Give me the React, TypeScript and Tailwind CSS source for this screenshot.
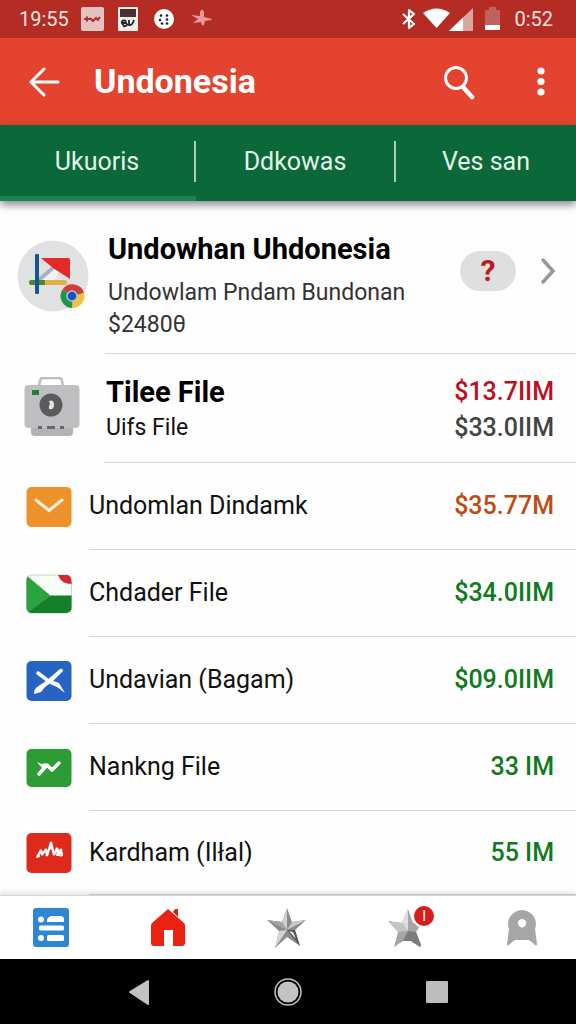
import React from 'react';

const tabs = ['Ukuoris', 'Ddkowas', 'Ves san'];

const rows = [
  { label: 'Undomlan Dindamk', amount: '$35.77M', color: 'text-[#c04a16]', icon: <MailIcon /> },
  { label: 'Chdader File', amount: '$34.0IIM', color: 'text-[#0f7a1c]', icon: <FlagIcon /> },
  { label: 'Undavian (Bagam)', amount: '$09.0IIM', color: 'text-[#0f7a1c]', icon: <CrossIcon /> },
  { label: 'Nankng File', amount: '33 IM', color: 'text-[#0f7a1c]', icon: <TrendIcon /> },
  { label: 'Kardham (Ilłal)', amount: '55 IM', color: 'text-[#0f7a1c]', icon: <PulseIcon /> },
];

function MailIcon() {
  return (
    <svg width="46" height="42" viewBox="0 0 46 42">
      <rect x="0.5" y="1" width="45" height="40" rx="5" fill="#ed922b" />
      <path d="M10 14l13 10.5L36 14" fill="none" stroke="#fff3dc" strokeWidth="3" strokeLinecap="round" />
    </svg>
  );
}

function FlagIcon() {
  return (
    <svg width="46" height="42" viewBox="0 0 46 42">
      <clipPath id="flag"><rect x="0.5" y="2" width="45" height="38" rx="5" /></clipPath>
      <g clipPath="url(#flag)">
        <rect y="2" width="46" height="38" fill="#f8fbf8" />
        <path d="M0 2l25 21L0 40z" fill="#2ba340" />
        <path d="M25 22.5h21V40H0z" fill="#14802a" />
        <path d="M32 2h11q3 3 3 9-11 0-14-9z" fill="#d8262c" />
      </g>
      <rect x="0.5" y="2" width="45" height="38" rx="5" fill="none" stroke="#14802a" strokeOpacity="0.25" />
    </svg>
  );
}

function CrossIcon() {
  return (
    <svg width="46" height="42" viewBox="0 0 46 42">
      <rect x="0.5" y="1" width="45" height="40" rx="5" fill="#2764c2" />
      <path d="M12 13l9 7 6 3" fill="none" stroke="#fff" strokeWidth="3.5" strokeLinecap="round" />
      <path d="M34 9q3-1 3 2L26 22l-7 5-4 5-7 2q0-5 3-7l9-6z" fill="#fff" />
      <path d="M25 20l8 3 6 10-8-6-7-3z" fill="#fff" />
    </svg>
  );
}

function TrendIcon() {
  return (
    <svg width="46" height="42" viewBox="0 0 46 42">
      <rect x="0.5" y="2" width="45" height="38" rx="5" fill="#2d9c35" />
      <path d="M13 27l8-9 5 5 7-7" fill="none" stroke="#fff" strokeWidth="3.5" strokeLinecap="round" strokeLinejoin="round" />
      <path d="M11 15l5 2 4-1-3 6z" fill="#fff" />
    </svg>
  );
}

function PulseIcon() {
  return (
    <svg width="46" height="42" viewBox="0 0 46 42">
      <rect x="0.5" y="1" width="45" height="40" rx="5" fill="#de2a1c" />
      <path d="M11 25l4-7 1 5 4-6 1 7 4-14 3 13 3-7 2 6 2-5 1 7" fill="none" stroke="#fff" strokeWidth="2.2" strokeLinejoin="bevel" />
      <path d="M10 26l3-6 1 5zM22 20l3-9 2 8-2-2zM30 24l1-6 5 7-3-1z" fill="#fff" />
    </svg>
  );
}

function StatusBar() {
  return (
    <div className="flex min-h-[38px] items-center bg-[#b42c24] pl-[19px] pr-[23px] text-white">
      <span className="text-xl text-[#fbe6e2]">19:55</span>
      <div className="ml-3 flex items-center gap-3.5">
        <svg width="23" height="24" viewBox="0 0 23 24">
          <rect width="23" height="24" rx="2" fill="#e3c2c2" />
          <path d="M3 12h6M6 9.5v5M9 11l3 3 3-3 2 2 2-3" fill="none" stroke="#b42c2c" strokeWidth="2" />
        </svg>
        <svg width="20" height="24" viewBox="0 0 20 24">
          <rect width="20" height="24" rx="1" fill="#f7eeee" />
          <rect x="2" y="2" width="16" height="8" fill="#4a2f33" />
          <path d="M4 16h4q0-3-2.5-2.500T4 16t2 3 4-2M11 13v5q3 1 5-5" fill="none" stroke="#222" strokeWidth="1.8" />
        </svg>
        <svg width="24" height="24" viewBox="0 0 24 24">
          <circle cx="12" cy="12" r="10" fill="#fff" />
          <g fill="#222">
            <circle cx="9" cy="8.500" r="1.3" /><circle cx="15" cy="8.500" r="1.3" />
            <circle cx="8" cy="13" r="1.3" /><circle cx="15" cy="12.500" r="1.3" />
            <circle cx="10" cy="16.500" r="1.3" /><circle cx="15" cy="16.500" r="1.3" />
          </g>
        </svg>
        <svg width="23" height="20" viewBox="0 0 23 20">
          <path d="M10 3q2-5 4 0v5l8 2q1 1-7 2l-1 4q-2 2-3-3l-8 1 5-4-7-4 9 1z" fill="#e79a96" />
        </svg>
      </div>
      <div className="ml-auto flex items-center">
        <svg width="16" height="24" viewBox="0 0 16 24">
          <path d="M2 7l11 10-5 4V3l5 4L2 17" fill="none" stroke="#fff" strokeWidth="2.2" strokeLinejoin="round" />
        </svg>
        <svg className="ml-1.5" width="52" height="24" viewBox="0 0 52 24">
          <path d="M0 6q13.500-9 27 0L13.500 21z" fill="#fff" />
          <path d="M50 1v23H26z" fill="#dba5a3" />
          <path d="M40 10.500V24H26z" fill="#fff" />
        </svg>
        <svg className="ml-2.5" width="15" height="24" viewBox="0 0 15 24">
          <path d="M0 3h4V0h7v3h4v15H0z" fill="#bf625e" />
          <rect y="18" width="15" height="5" fill="#fff" />
        </svg>
        <span className="ml-3.5 text-xl text-[#fbe6e2]">0:52</span>
      </div>
    </div>
  );
}

function Header() {
  return (
    <header className="flex min-h-[87px] items-center bg-[#e4442f] pl-7 pr-5 text-white">
      <button aria-label="Back">
        <svg width="32" height="32" viewBox="0 0 32 32">
          <path d="M16 3L3 16l13 13M3 16h27" fill="none" stroke="#fff" strokeWidth="3" strokeLinecap="round" strokeLinejoin="round" />
        </svg>
      </button>
      <h1 className="ml-[34px] text-[34px] font-bold">Undonesia</h1>
      <button className="ml-auto" aria-label="Search">
        <svg width="34" height="36" viewBox="0 0 34 36">
          <circle cx="14" cy="14" r="10.5" fill="none" stroke="#fff" strokeWidth="3" />
          <path d="M21 23l9 10" stroke="#fff" strokeWidth="4.5" strokeLinecap="round" />
        </svg>
      </button>
      <button className="ml-[50px]" aria-label="More options">
        <svg width="30" height="30" viewBox="0 0 30 30" fill="#fff">
          <circle cx="15" cy="4" r="3.6" />
          <circle cx="15" cy="14.5" r="3.6" />
          <circle cx="15" cy="25" r="3.6" />
        </svg>
      </button>
    </header>
  );
}

function AppsIcon() {
  return (
    <svg width="72" height="72" viewBox="0 0 72 72">
      <circle cx="36" cy="36" r="35.5" fill="#e1e1e3" />
      <path d="M22 40l12-15 10 2-6 13z" fill="#f2f3f6" />
      <path d="M22 40l16-14" stroke="#a9b0bb" strokeWidth="4" />
      <path d="M24 18h27q2 0 2 2v19L36 28z" fill="#e22a26" />
      <rect x="12" y="40" width="38" height="5" rx="2" fill="#e4b044" />
      <path d="M14 40h14v5H14q-2 0-2-2.500t2-2.500z" fill="#4b8a35" />
      <rect x="18" y="14" width="4" height="40" rx="1" fill="#15568f" />
      <g>
        <path d="M55.500 56L45.500 49.500A12 12 0 0 1 67 53z" fill="#d33a3c" />
        <path d="M55.500 56V68A12 12 0 0 1 45.500 49.500z" fill="#24934c" />
        <path d="M55.500 56L67 53A12 12 0 0 1 55.500 68z" fill="#efc33b" />
        <circle cx="55" cy="56" r="5" fill="#1b51b8" stroke="#a8c3e8" strokeWidth="1.5" />
      </g>
    </svg>
  );
}

function CameraIcon() {
  return (
    <svg width="56" height="60" viewBox="0 0 56 60">
      <path d="M15 10l1-6q0-3 3-3h16q3 0 3 3l1 6" fill="none" stroke="#bdbdbf" strokeWidth="2.5" />
      <path d="M7 48h42v7q0 4-4 4H11q-4 0-4-4z" fill="#b3b3b5" />
      <rect x="0.5" y="8" width="55" height="43" rx="4" fill="#bfbfc1" />
      <rect x="8" y="13" width="7" height="5" fill="#23803a" />
      <circle cx="27" cy="28" r="11.5" fill="#5b5b5e" />
      <path d="M25 24q5-2 5 4 0 5-5 4v-3l1-2z" fill="#e3e3e3" />
      <path d="M14 50.500h4M23 50.500h8M36 50.500h4" stroke="#68686a" strokeWidth="3" />
    </svg>
  );
}

function BottomNav() {
  return (
    <nav className="relative flex min-h-[64px] items-center justify-between border-t border-gray-300 bg-white pl-[33px] pr-[38px] shadow-[0_-3px_5px_rgba(0,0,0,0.1)]">
      <button aria-label="List">
        <svg width="36" height="39" viewBox="0 0 36 39">
          <rect width="36" height="39" rx="3" fill="#2f86d2" />
          <g fill="#fff">
            <circle cx="8" cy="11.5" r="3" />
            <path d="M14 14v-2q1-4 5-4h8q4 0 4 3v3z" />
            <rect x="6" y="17.5" width="25" height="5" rx="1.5" />
            <circle cx="8" cy="30" r="3" />
            <rect x="14" y="27" width="17" height="6" rx="1.5" />
          </g>
        </svg>
      </button>
      <button aria-label="Home">
        <svg width="34" height="37" viewBox="0 0 34 37">
          <path d="M22 3q1-3 3-3h2v8z" fill="#d32618" />
          <path d="M17 0l16 14q1 1 1 3v17q0 3-3 3h-9V21h-9v16H3q-3 0-3-3V17q0-2 1-3z" fill="#ec2213" />
        </svg>
      </button>
      <button aria-label="Favorites">
        <svg width="40" height="40" viewBox="0 0 40 40">
          <path d="M20 0l5 14 14-2-11 10 5 16-13-9-12 11 4-17L0 12l15 2z" fill="#8b8b8d" />
          <path d="M20 0v22l-5-8z" fill="#d0d0d1" />
          <path d="M0 12l15 2 5 8z" fill="#a6a6a8" />
          <path d="M20 22h8l5 16z" fill="#57575a" />
          <path d="M20 22l19-10-14 2z" fill="#c8c8c9" />
          <path d="M20 22l-8 1-4 17z" fill="#d5d5d6" />
          <path d="M22 23l4 1 3 7z" fill="#f0f0f0" />
        </svg>
      </button>
      <button className="relative" aria-label="Starred">
        <svg width="36" height="40" viewBox="0 0 36 40">
          <path d="M20 1l5 14 9 0-6 9 5 13-1 2-9-6h-8L6 39l4-15L0 13l14 2z" fill="#a5a5a7" />
          <path d="M20 1v22l-6-8z" fill="#dcdcdd" />
          <path d="M0 13l14 2 6 8-10 1z" fill="#c4c4c6" />
          <path d="M20 23l8 1 5 13-1 2-9-6h-8z" fill="#7c7c7f" />
        </svg>
        <span className="absolute -right-3 -top-1 flex size-6 items-center justify-center rounded-full border-2 border-white bg-[#d91c1c] text-sm text-white">I</span>
      </button>
      <button aria-label="Profile">
        <svg width="32" height="38" viewBox="0 0 32 38">
          <path fillRule="evenodd" d="M16 1a14 14 0 0 1 13 19l2 15q0 2-2 1-6-6-9-5h-8q-3-1-9 5-2 1-2-1l2-15A14 14 0 0 1 16 1zm0 9a4.200 4.200 0 1 0 .1 0z" fill="#a6a6a8" />
        </svg>
      </button>
    </nav>
  );
}

function SystemBar() {
  return (
    <div className="flex min-h-[65px] items-center justify-center gap-[115px] bg-black">
      <button aria-label="System back">
        <svg width="40" height="28" viewBox="0 0 40 28"><path d="M11 14L29 3v23z" fill="#c3c1c2" stroke="#c3c1c2" strokeWidth="2" strokeLinejoin="round" /></svg>
      </button>
      <button aria-label="System home">
        <svg width="28" height="28" viewBox="0 0 28 28">
          <circle cx="14" cy="14" r="13" fill="none" stroke="#c3c1c2" strokeWidth="1.5" />
          <circle cx="14" cy="14" r="10.5" fill="#c3c1c2" />
        </svg>
      </button>
      <button aria-label="Recent apps">
        <svg width="40" height="28" viewBox="0 0 40 28"><rect x="9" y="3" width="22" height="22" rx="1" fill="#bdbdbd" /></svg>
      </button>
    </div>
  );
}

export default function App() {
  return (
    <div className="flex min-h-screen flex-col bg-[#fdfefd] font-['Roboto','Liberation_Sans',sans-serif] text-[#111]">
      <StatusBar />
      <Header />

      <div role="tablist" className="relative grid min-h-[76px] grid-cols-[196px_200px_1fr] bg-[#0b6838] text-[25px] text-[#e3f5e8] shadow-[0_4px_8px_rgba(0,0,0,0.45)]">
        {tabs.map((tab, i) => (
          <button
            key={tab}
            role="tab"
            aria-selected={i === 0}
            className={`flex items-stretch border-b-[5px] pb-3.5 pt-4 ${i === 0 ? 'border-[#178553]' : 'border-transparent'}`}
          >
            <span className={`flex flex-1 items-center justify-center ${i < 2 ? 'border-r-2 border-[#a9cfb6]' : ''}`}>{tab}</span>
          </button>
        ))}
      </div>

      <main className="flex-1">
        <section className="flex min-h-[153px] pl-[17px]">
          <div className="pt-[39px]"><AppsIcon /></div>
          <div className="ml-4 flex flex-1 border-b border-gray-300 pt-[30px]">
            <div className="flex-1 whitespace-nowrap pl-[3px]">
              <h2 className="text-[29px] leading-9 font-bold text-black">Undowhan Uhdonesia</h2>
              <p className="mt-2.5 text-[23px] leading-8 text-[#333]">Undowlam Pndam Bundonan</p>
              <p className="text-[23px] leading-8 text-[#333]">$2480θ</p>
            </div>
            <div className="mr-5 flex h-20 items-center">
              <button className="h-10 w-14 rounded-full bg-[#dfdfdf] text-3xl font-bold text-[#bd1620]">?</button>
              <button className="ml-6" aria-label="Open">
                <svg width="16" height="28" viewBox="0 0 16 28"><path d="M3 3l10 11L3 25" fill="none" stroke="#98989a" strokeWidth="3.5" strokeLinecap="round" /></svg>
              </button>
            </div>
          </div>
        </section>

        <section className="flex min-h-[109px] pl-6">
          <div className="pt-[23px]"><CameraIcon /></div>
          <div className="ml-6 flex flex-1 border-b border-gray-300 pr-[22px] pt-5">
            <div className="flex-1 pl-0.5">
              <h2 className="text-[29px] leading-9 font-bold text-black">Tilee File</h2>
              <p className="text-[23px] leading-9">Uifs File</p>
            </div>
            <div className="text-right text-[25px] leading-9 font-medium">
              <p className="text-[#c00d1e]">$13.7IIM</p>
              <p className="text-[#444]">$33.0IIM</p>
            </div>
          </div>
        </section>

        <ul>
          {rows.map((row) => (
            <li key={row.label} className="flex min-h-[87px] items-stretch pl-[26px] last:min-h-[84px]">
              <div className="flex items-center">{row.icon}</div>
              <div className="ml-[17px] flex flex-1 items-center justify-between border-b border-gray-300 pr-[22px]">
                <span className="text-[25px]">{row.label}</span>
                <span className={`text-[25px] font-medium ${row.color}`}>{row.amount}</span>
              </div>
            </li>
          ))}
        </ul>
      </main>

      <BottomNav />
      <SystemBar />
    </div>
  );
}
